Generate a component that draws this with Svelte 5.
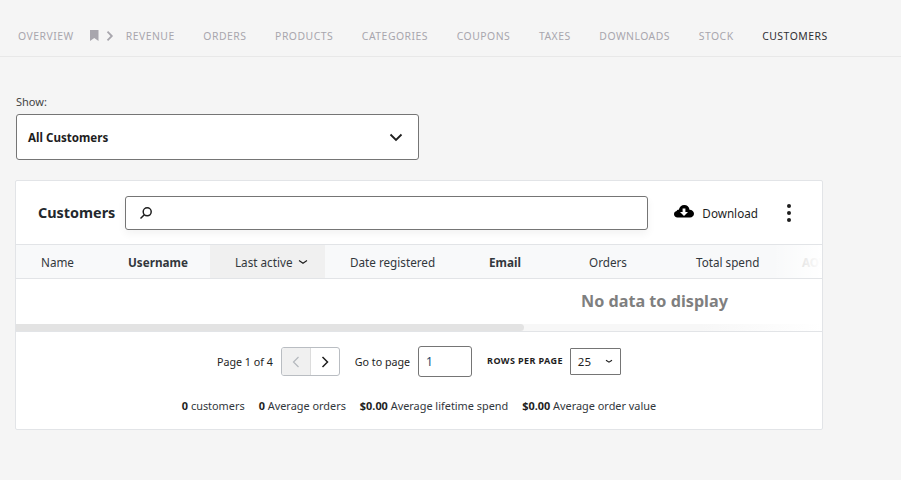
<script>
  const tabs = ['Revenue', 'Orders', 'Products', 'Categories', 'Coupons', 'Taxes', 'Downloads', 'Stock', 'Customers'];

  const columns = [
    { label: 'Name', width: 87 },
    { label: 'Username', width: 107, bold: true },
    { label: 'Last active', width: 115, sorted: true },
    { label: 'Date registered', width: 139 },
    { label: 'Email', width: 100, bold: true },
    { label: 'Orders', width: 107 },
    { label: 'Total spend', width: 106 },
    { label: 'AOV', width: 60, bold: true, faded: true }
  ];

  const totals = [
    { value: '0', label: 'customers' },
    { value: '0', label: 'Average orders' },
    { value: '$0.00', label: 'Average lifetime spend' },
    { value: '$0.00', label: 'Average order value' }
  ];
</script>

<nav class="tabs">
  <a href="#overview" class="tab first">Overview</a>
  <svg class="bookmark" width="9" height="11" viewBox="0 0 9 11"><path d="M0 0h8.500v11L4.250 8 0 11z" fill="#a8a6ad" /></svg>
  <svg class="crumb" width="8" height="12" viewBox="0 0 8 12"><path d="M1.500 1.700 5.800 6l-4.300 4.300" fill="none" stroke="#a8a6ad" stroke-width="1.800" /></svg>
  {#each tabs as tab}
    <a href="#{tab}" class="tab" class:active={tab === 'Customers'}>{tab}</a>
  {/each}
</nav>

<main>
  <div class="show-label">Show:</div>
  <div class="select">
    <span>All Customers</span>
    <svg width="14" height="9" viewBox="0 0 14 9"><path d="M1.500 1.500 7 7l5.500-5.500" fill="none" stroke="#1e1e1e" stroke-width="1.800" /></svg>
  </div>

  <section class="card">
    <header class="card-head">
      <h2>Customers</h2>
      <div class="search">
        <svg width="14" height="14" viewBox="0 0 14 14"><circle cx="8.200" cy="5.800" r="4" fill="none" stroke="#1e1e1e" stroke-width="1.500" /><path d="M5.300 8.700 1.500 12.500" stroke="#1e1e1e" stroke-width="1.500" /></svg>
      </div>
      <div class="download">
        <svg class="cloud" width="20" height="15" viewBox="0 0 20 15"><path fill-rule="evenodd" d="M3.500 13.500C1.500 13.500 0 12 0 10.200 0 8.600 1.100 7.300 2.600 7 3 6.200 3.800 5.700 4.800 5.800 5.600 2.800 7.500 1 10.200 1c2.900 0 5 2 5.300 4.800 2.600 0 4.500 1.800 4.500 4 0 2-1.700 3.700-4 3.700zM8.600 4.500v3.500H6l4 4 4-4h-2.600V4.500z" fill="#000" /></svg>
        <span>Download</span>
      </div>
      <div class="more"><i></i><i></i><i></i></div>
    </header>

    <div class="table">
      <div class="table-head">
        {#each columns as col}
          <div class="th" class:bold={col.bold} class:sorted={col.sorted} class:faded={col.faded} style="width: {col.width}px">
            {col.label}
            {#if col.sorted}
              <svg width="10" height="6" viewBox="0 0 10 6"><path d="M1 1.500l4 2.700 4-2.700" fill="none" stroke="#1e1e1e" stroke-width="1.200" /></svg>
            {/if}
          </div>
        {/each}
        <div class="fade"></div>
      </div>
      <div class="empty">No data to display</div>
      <div class="scrollbar"><div class="thumb"></div></div>
    </div>

    <footer class="card-foot">
      <div class="pager">
        <span class="page-of">Page 1 of 4</span>
        <div class="arrows">
          <div class="arrow off"><svg width="8" height="12" viewBox="0 0 8 12"><path d="M6.500 1 1.500 6l5 5" fill="none" stroke="#b4b8bd" stroke-width="1.200" /></svg></div>
          <div class="arrow"><svg width="8" height="12" viewBox="0 0 8 12"><path d="M1.500 1l5 5-5 5" fill="none" stroke="#1e1e1e" stroke-width="1.500" /></svg></div>
        </div>
        <span class="goto">Go to page</span>
        <div class="page-input">1</div>
        <span class="rows-label">Rows per page</span>
        <div class="rows-select">
          <span>25</span>
          <svg width="8" height="5" viewBox="0 0 8 5"><path d="M1 1.200l3 2L7 1.200" fill="none" stroke="#1e1e1e" stroke-width="1.100" /></svg>
        </div>
      </div>
      <div class="totals">
        {#each totals as t}
          <span><b>{t.value}</b> {t.label}</span>
        {/each}
      </div>
    </footer>
  </section>
</main>

<style>
  :global(body) {
    background: #f5f5f5;
    font-family: "Noto Sans", sans-serif;
    color: #1e1e1e;
  }

  .tabs {
    display: flex;
    align-items: center;
    height: 57px;
    padding: 15px 0 0 18px;
    box-sizing: border-box;
    border-bottom: 1px solid #e8e8e8;
  }

  .tab {
    flex: none;
    font-size: 10.400px;
    letter-spacing: 0.5px;
    text-transform: uppercase;
    color: #a8a6ad;
    text-decoration: none;
    margin-right: 28.650px;
  }

  .tab.first {
    margin-right: 16.500px;
  }

  .tab.active {
    color: #2f2f33;
  }

  .tabs svg {
    flex: none;
  }

  .crumb {
    margin: 0 11.500px 0 7px;
  }

  main {
    padding: 37px 0 0 15px;
  }

  .show-label {
    font-size: 11px;
    line-height: 15px;
    margin: 0 0 5px 1px;
    color: #444;
  }

  .select {
    display: flex;
    align-items: center;
    justify-content: space-between;
    width: 403px;
    height: 46px;
    margin-left: 1px;
    padding: 0 15px 0 11px;
    box-sizing: border-box;
    background: #fff;
    border: 1px solid #757575;
    border-radius: 3px;
    font-size: 11.600px;
    font-weight: 700;
  }

  .card {
    width: 808px;
    height: 250px;
    box-sizing: border-box;
    margin-top: 20px;
    background: #fff;
    border: 1px solid #e2e4e7;
    border-radius: 2px;
  }

  .card-head {
    display: flex;
    align-items: center;
    height: 63px;
    padding: 0 0 0 22px;
    box-sizing: border-box;
  }

  h2 {
    flex: none;
    margin: 0 10px 0 0;
    font-size: 14.400px;
    font-weight: 700;
    line-height: 20px;
    color: #23282d;
  }

  .search {
    flex: none;
    display: flex;
    align-items: center;
    width: 523px;
    height: 34px;
    padding-left: 13px;
    box-sizing: border-box;
    border: 1px solid #757575;
    border-radius: 3px;
    box-shadow: 0 4px 8px rgba(0, 0, 0, 0.05);
  }

  .download {
    display: flex;
    align-items: center;
    gap: 8px;
    margin-left: 26px;
    font-size: 11.700px;
  }

  .cloud {
    margin-top: -2px;
  }

  .more {
    display: flex;
    flex-direction: column;
    gap: 3px;
    margin-left: 29px;
  }

  .more i {
    width: 4px;
    height: 4px;
    border-radius: 50%;
    background: #1e1e1e;
  }

  .table-head {
    position: relative;
    display: flex;
    height: 35px;
    background: #f8f9fa;
    border-top: 1px solid #e2e4e7;
    border-bottom: 1px solid #e2e4e7;
    box-sizing: border-box;
    overflow: hidden;
  }

  .th {
    flex: none;
    display: flex;
    align-items: center;
    gap: 6px;
    padding-left: 25px;
    box-sizing: border-box;
    font-size: 11.700px;
    white-space: nowrap;
    color: #32373c;
  }

  .th.bold {
    font-weight: 700;
  }

  .th.sorted {
    background: #f0f0f0;
  }

  .th.faded {
    color: #c0c0c0;
  }

  .fade {
    position: absolute;
    top: 0;
    right: 0;
    bottom: 0;
    width: 50px;
    background: linear-gradient(to right, rgba(255, 255, 255, 0), #fff);
  }

  .empty {
    height: 45px;
    padding: 10px 0 0 565px;
    box-sizing: border-box;
    font-size: 16.200px;
    font-weight: 700;
    line-height: 24px;
    color: #7f7f7f;
    white-space: nowrap;
  }

  .scrollbar {
    height: 7px;
    background: linear-gradient(to right, #f7f7f7 85%, #fff);
  }

  .thumb {
    width: 508px;
    height: 7px;
    border-radius: 0 4px 4px 0;
    background: #e3e3e3;
  }

  .card-foot {
    border-top: 1px solid #e2e4e7;
  }

  .pager {
    display: flex;
    align-items: center;
    height: 59px;
    padding: 0 0 0 201px;
    font-size: 10.700px;
  }

  .arrows {
    display: flex;
    width: 59px;
    height: 29px;
    margin-left: 8px;
    box-sizing: border-box;
    border: 1px solid #b9bdc2;
    border-radius: 3px;
    overflow: hidden;
  }

  .arrow {
    flex: 1;
    display: flex;
    align-items: center;
    justify-content: center;
  }

  .arrow.off {
    background: #f0f0f0;
    border-right: 1px solid #dcdcdc;
  }

  .goto {
    margin-left: 15px;
  }

  .page-input {
    display: flex;
    align-items: center;
    width: 54px;
    height: 31px;
    margin-left: 8px;
    padding-left: 7px;
    box-sizing: border-box;
    border: 1px solid #757575;
    border-radius: 3px;
    font-size: 12px;
    color: #1e4a6d;
  }

  .rows-label {
    margin: -2px 0 0 15px;
    font-size: 9px;
    font-weight: 700;
    letter-spacing: 0.4px;
    text-transform: uppercase;
  }

  .rows-select {
    display: flex;
    align-items: center;
    justify-content: space-between;
    width: 51px;
    height: 27px;
    margin-left: 7px;
    padding: 0 7px;
    box-sizing: border-box;
    border: 1px solid #757575;
    border-radius: 1px;
    font-size: 11.500px;
  }

  .totals {
    display: flex;
    justify-content: center;
    gap: 14px;
    margin-top: 7px;
    font-size: 10.900px;
    line-height: 16px;
    color: #32373c;
  }

  .totals b {
    font-weight: 700;
    color: #1e1e1e;
  }
</style>
